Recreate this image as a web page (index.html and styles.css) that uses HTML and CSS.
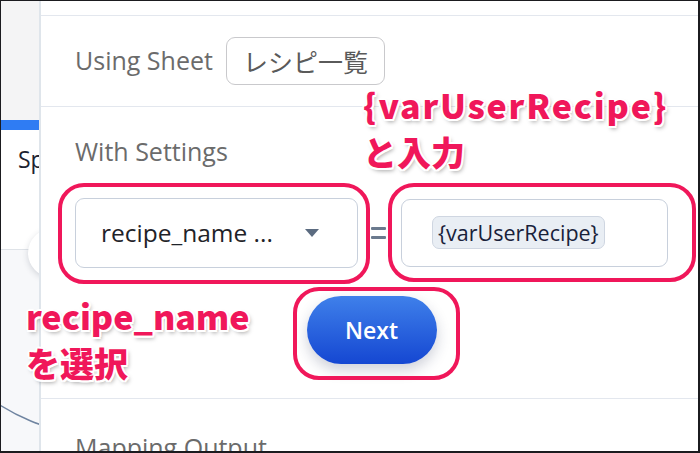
FILE: index.html
```html
<!DOCTYPE html>
<html lang="ja">
<head>
<meta charset="utf-8">
<link rel="stylesheet" href="styles.css">
</head>
<body>
<div class="frame">
  <aside class="sidebar">
    <div class="side-top"></div>
    <div class="side-tab"></div>
    <div class="side-body">
      <div class="side-label">Sp</div>
    </div>
    <div class="side-bottom"></div>
    <div class="side-knob"></div>
    <div class="side-arc"></div>
  </aside>
  <main class="main">
    <div class="strip"></div>
    <section class="sec sec-sheet">
      <span class="label">Using Sheet</span>
      <span class="sheet-chip">レシピ一覧</span>
    </section>
    <section class="sec sec-settings">
      <div class="label">With Settings</div>
      <div class="row">
        <div class="select">
          <span class="select-text">recipe_name ...</span>
          <span class="caret"></span>
        </div>
        <div class="equals"><span></span><span></span></div>
        <div class="input">
          <span class="var-chip">{varUserRecipe}</span>
        </div>
      </div>
      <div class="actions">
        <button class="next">Next</button>
      </div>
    </section>
    <section class="sec sec-output">
      <div class="label">Mapping Output</div>
    </section>
  </main>

  <div class="mark mark-select"></div>
  <div class="mark mark-input"></div>
  <div class="mark mark-next"></div>

  <div class="note note-input"><span class="wide">{varUserRecipe}</span><br>と入力</div>
  <div class="note note-select">recipe_name<br>を選択</div>
</div>
</body>
</html>
```

FILE: styles.css
```css
* { box-sizing: border-box; }
html, body { margin: 0; padding: 0; }
body {
  width: 700px;
  height: 453px;
  overflow: hidden;
  background: #fff;
  font-family: "Open Sans", "Noto Sans CJK JP", sans-serif;
}
.frame {
  position: relative;
  width: 700px;
  height: 453px;
  border-style: solid;
  border-color: #1b1b1f;
  border-width: 1px 2px 2px 1px;
  display: flex;
  overflow: hidden;
}

/* sidebar */
.sidebar {
  position: relative;
  width: 38px;
  flex: none;
  display: flex;
  flex-direction: column;
  background: #fff;
  overflow: hidden;
}
.side-top { height: 119px; background: #f4f4f5; flex: none; }
.side-tab { height: 10px; background: #2f7cf3; flex: none; }
.side-body { height: 120px; flex: none; border-bottom: 1px solid #dfe3e8; padding: 18px 0 0 17px; }
.side-label { font-size: 23px; color: #1d2330; line-height: 1; white-space: nowrap; }
.side-bottom { flex: 1; background: #f7f8fa; }
.side-knob {
  position: absolute;
  left: 27px;
  top: 228px;
  width: 48px;
  height: 48px;
  border-radius: 50%;
  background: #fff;
  box-shadow: 0 2px 6px rgba(40, 50, 70, 0.18);
}
.side-arc {
  position: absolute;
  left: -94px;
  top: 36px;
  width: 400px;
  height: 400px;
  border-radius: 50%;
  border-bottom: 2.5px solid #6f84a0;
}

/* main */
.main {
  flex: 1;
  border-left: 2px solid #dfe5eb;
  display: flex;
  flex-direction: column;
  background: #fff;
}
.strip { height: 15px; border-bottom: 1px solid #e3e7ee; flex: none; }
.sec { padding: 0 30px 0 34px; flex: none; }
.label { font-size: 25px; color: #6b6b6b; line-height: 1.35; }
.sec-sheet {
  height: 91px;
  border-bottom: 1.5px solid #e3e7ee;
  display: flex;
  align-items: center;
  gap: 13px;
}
.sheet-chip {
  height: 48px;
  padding: 0 16px;
  border: 1.5px solid #c9c9cc;
  border-radius: 9px;
  display: flex;
  align-items: center;
  font-size: 25px;
  color: #5a5a5a;
  font-family: "Noto Sans CJK JP", sans-serif;
}
.sec-settings {
  height: 292px;
  border-bottom: 1.5px solid #e3e7ee;
  padding-top: 28px;
}
.row {
  margin-top: 29px;
  display: flex;
  align-items: center;
}
.select {
  width: 283px;
  height: 70px;
  border: 1.5px solid #c8d0dc;
  border-radius: 9px;
  display: flex;
  align-items: center;
  padding: 0 38px 0 25px;
  justify-content: space-between;
}
.select-text { font-size: 24.5px; color: #1f2329; }
.caret {
  width: 0; height: 0;
  border-left: 7.5px solid transparent;
  border-right: 7.5px solid transparent;
  border-top: 8px solid #5b6b80;
}
.equals {
  width: 15px;
  height: 12px;
  margin: 0 15px 0 13px;
  display: flex;
  flex-direction: column;
  justify-content: space-between;
}
.equals span { height: 3px; background: #6b7a8e; border-radius: 1px; }
.input {
  width: 267px;
  height: 68px;
  border: 1.5px solid #c8d0dc;
  border-radius: 9px;
  display: flex;
  align-items: center;
  padding-left: 30px;
}
.var-chip {
  height: 33px;
  padding: 0 5px;
  background: #e9eef4;
  border: 1.5px solid #cfd6e1;
  border-radius: 7px;
  display: flex;
  align-items: center;
  font-size: 21.5px;
  color: #18213a;
}
.actions {
  margin-top: 28px;
  display: flex;
  justify-content: center;
}
.next {
  width: 130px;
  height: 68px;
  border: none;
  border-radius: 34px;
  background: linear-gradient(#3f80ea, #1547d2);
  color: #fff;
  font-family: "Open Sans", sans-serif;
  font-size: 23px;
  font-weight: 600;
  box-shadow: 0 6px 14px rgba(30, 40, 80, 0.22);
  padding: 0;
}
.sec-output { padding-top: 32px; }

/* annotations */
.mark {
  position: absolute;
  border: 4px solid #f0175a;
  border-radius: 26px;
}
.mark-select { left: 57px; top: 182px; width: 312px; height: 101px; }
.mark-input { left: 387px; top: 182px; width: 308px; height: 99px; }
.mark-next { left: 292px; top: 286px; width: 167px; height: 93px; }

.note {
  position: absolute;
  font-family: "Noto Sans CJK JP", sans-serif;
  font-weight: 900;
  color: #f0175a;
  font-size: 34px;
  line-height: 47px;
  white-space: nowrap;
  text-shadow:
    2px 0 0 #fff, -2px 0 0 #fff, 0 2px 0 #fff, 0 -2px 0 #fff,
    1.5px 1.5px 0 #fff, -1.5px 1.5px 0 #fff, 1.5px -1.5px 0 #fff, -1.5px -1.5px 0 #fff,
    2px 3px 4px rgba(0, 0, 0, 0.35);
}
.wide { letter-spacing: 1.8px; }
.note-input { left: 362px; top: 80px; }
.note-select { left: 25px; top: 291px; }
```
